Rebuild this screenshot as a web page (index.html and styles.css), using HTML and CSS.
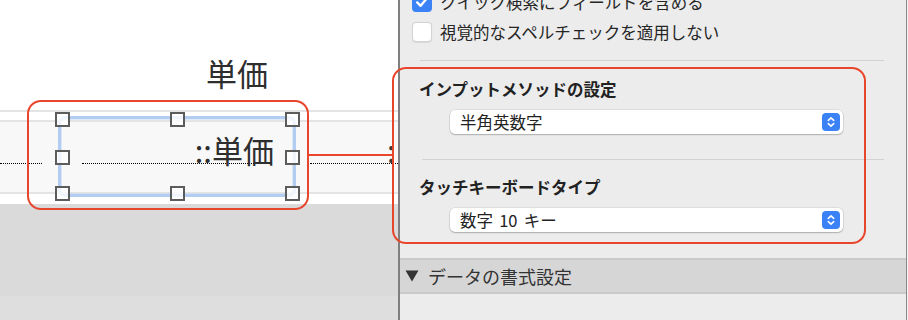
FILE: index.html
```html
<!DOCTYPE html>
<html lang="ja">
<head>
<meta charset="utf-8">
<title>Inspector</title>
<link rel="stylesheet" href="styles.css">
</head>
<body>
<div class="screen">
  <div class="canvas">
    <div class="canvas-head"><span class="label">単価</span></div>
    <div class="rule"></div>
    <div class="gap-a"></div>
    <div class="rule"></div>
    <div class="body-row"></div>
    <div class="rule"></div>
    <div class="gap-b"></div>
    <div class="footer-a"></div>
    <div class="footer-b"></div>

    <div class="dots dots-1"></div>
    <div class="dots dots-2"></div>
    <div class="dots dots-3"></div>

    <div class="field"></div>
    <div class="field-text">::単価</div>
    <div class="next-text">:</div>

    <div class="handle h-tl"></div>
    <div class="handle h-tc"></div>
    <div class="handle h-tr"></div>
    <div class="handle h-ml"></div>
    <div class="handle h-mr"></div>
    <div class="handle h-bl"></div>
    <div class="handle h-bc"></div>
    <div class="handle h-br"></div>
  </div>

  <div class="panel">
    <div class="checks">
      <div class="check-row">
        <span class="box box-on">
          <svg viewBox="0 0 20 20" width="20" height="20"><path d="M5.2 10.4 L8.6 13.8 L14.8 6.4" fill="none" stroke="#fff" stroke-width="2.4" stroke-linecap="round" stroke-linejoin="round"/></svg>
        </span>
        <span class="check-text">クイック検索にフィールドを含める</span>
      </div>
      <div class="check-row">
        <span class="box box-off"></span>
        <span class="check-text">視覚的なスペルチェックを適用しない</span>
      </div>
    </div>

    <div class="sep sep-1"></div>

    <div class="section sec-1">
      <div class="heading">インプットメソッドの設定</div>
      <div class="popup">
        <span class="popup-text">半角英数字</span>
        <span class="stepper">
          <svg viewBox="0 0 18 18" width="18" height="18"><path d="M6.3 7.4 L9 4.9 L11.7 7.4 M6.3 10.6 L9 13.1 L11.7 10.6" fill="none" stroke="#fff" stroke-width="1.6" stroke-linecap="round" stroke-linejoin="round"/></svg>
        </span>
      </div>
    </div>

    <div class="sep sep-2"></div>

    <div class="section sec-2">
      <div class="heading">タッチキーボードタイプ</div>
      <div class="popup">
        <span class="popup-text popup-spaced">数字 10 キー</span>
        <span class="stepper">
          <svg viewBox="0 0 18 18" width="18" height="18"><path d="M6.3 7.4 L9 4.9 L11.7 7.4 M6.3 10.6 L9 13.1 L11.7 10.6" fill="none" stroke="#fff" stroke-width="1.6" stroke-linecap="round" stroke-linejoin="round"/></svg>
        </span>
      </div>
    </div>

    <div class="group-head">
      <svg class="disclosure" viewBox="0 0 14 12" width="14" height="12"><path d="M0.5 0.5 L13.5 0.5 L7 11.5 Z" fill="#333"/></svg>
      <span class="group-title">データの書式設定</span>
    </div>
    <div class="group-body"></div>
  </div>

  <div class="edge"></div>

  <div class="callout callout-field"></div>
  <div class="callout-link"></div>
  <div class="callout callout-panel"></div>
</div>
</body>
</html>
```

FILE: styles.css
```css
* {
  box-sizing: border-box;
}

html, body {
  margin: 0;
  padding: 0;
}

body {
  width: 908px;
  height: 320px;
  overflow: hidden;
  font-family: "Noto Sans CJK JP", "Noto Sans", sans-serif;
  color: #262626;
}

.screen {
  position: relative;
  display: flex;
  width: 908px;
  height: 320px;
  overflow: hidden;
}

/* ---------- layout canvas ---------- */
.canvas {
  position: relative;
  width: 398px;
  height: 320px;
  display: flex;
  flex-direction: column;
  background: #ffffff;
  overflow: hidden;
  flex: none;
}

.canvas-head {
  height: 110px;
  padding-left: 206px;
  padding-top: 57px;
}

.label {
  display: block;
  font-size: 31px;
  line-height: 1;
  color: #2e2e2e;
}

.rule {
  height: 2px;
  background: #e4e4e4;
}

.gap-a {
  height: 8px;
  background: #ffffff;
}

.body-row {
  height: 70px;
  background: #f8f8f8;
}

.gap-b {
  height: 10px;
  background: #ffffff;
}

.footer-a {
  height: 92px;
  background: #dadada;
}

.footer-b {
  flex: 1;
  background: #dedede;
}

.dots {
  position: absolute;
  top: 163px;
  height: 0;
  border-top: 1px dotted #000;
}

.dots-1 { left: 0; width: 42px; }
.dots-2 { left: 82px; width: 190px; }
.dots-3 { left: 310px; width: 88px; }

.field {
  position: absolute;
  left: 58px;
  top: 116px;
  width: 238px;
  height: 81px;
  border: 3px solid #b3cdf2;
  border-radius: 7px;
  box-shadow: inset 0 0 0 1px rgba(200, 220, 246, 0.6);
}

.field-text {
  position: absolute;
  left: 150px;
  width: 124px;
  top: 134px;
  text-align: right;
  font-size: 31px;
  line-height: 1;
  color: #2e2e2e;
}

.next-text {
  position: absolute;
  left: 387px;
  top: 134px;
  font-size: 31px;
  line-height: 1;
  color: #3a3a3a;
}

.handle {
  position: absolute;
  width: 15px;
  height: 15px;
  border: 2px solid #5c5c5c;
  background: rgba(255, 255, 255, 0.8);
}

.h-tl { left: 55px;  top: 112px; }
.h-tc { left: 170px; top: 112px; }
.h-tr { left: 285px; top: 112px; }
.h-ml { left: 55px;  top: 150px; }
.h-mr { left: 285px; top: 150px; }
.h-bl { left: 55px;  top: 186px; }
.h-bc { left: 170px; top: 186px; }
.h-br { left: 285px; top: 186px; }

/* ---------- inspector panel ---------- */
.panel {
  width: 508px;
  height: 320px;
  flex: none;
  background: #ececec;
  border-left: 2px solid #7f7f7f;
  display: flex;
  flex-direction: column;
  overflow: hidden;
}

.checks {
  margin-top: -8px;
  padding-left: 12px;
  display: flex;
  flex-direction: column;
  gap: 10px;
}

.check-row {
  display: flex;
  align-items: center;
  gap: 8px;
  height: 20px;
}

.box {
  width: 20px;
  height: 20px;
  border-radius: 4px;
  flex: none;
  display: block;
}

.box svg {
  display: block;
}

.box-on {
  background: #3a82f6;
}

.box-off {
  background: #ffffff;
  border: 1px solid #d2d2d2;
  box-shadow: 0 0.5px 1px rgba(0, 0, 0, 0.08);
}

.check-text {
  font-size: 16.5px;
  line-height: 20px;
  color: #262626;
  white-space: nowrap;
}

.sep {
  height: 1px;
  background: #d2d2d2;
  margin-right: 22px;
}

.sep-1 {
  margin-top: 18px;
  margin-left: 20px;
}

.sep-2 {
  margin-top: 25px;
  margin-left: 22px;
}

.section {
  display: flex;
  flex-direction: column;
}

.sec-1 {
  padding-top: 18px;
}

.sec-2 {
  padding-top: 17px;
}

.heading {
  padding-left: 19px;
  font-size: 16.5px;
  line-height: 20px;
  font-weight: 700;
  color: #222;
  white-space: nowrap;
}

.popup {
  margin-top: 11px;
  margin-left: 50px;
  width: 393px;
  height: 24px;
  background: #ffffff;
  border-radius: 5px;
  box-shadow: 0 0 0 0.5px rgba(0, 0, 0, 0.12), 0 1px 1.5px rgba(0, 0, 0, 0.22);
  display: flex;
  align-items: center;
  justify-content: space-between;
  padding-left: 10px;
  padding-right: 3px;
}

.popup-text {
  font-size: 16.5px;
  line-height: 20px;
  color: #222;
  white-space: nowrap;
}

.popup-spaced {
  word-spacing: 2.5px;
}

.stepper {
  width: 18px;
  height: 18px;
  border-radius: 4px;
  background: #3a82f6;
  display: block;
}

.stepper svg {
  display: block;
}

.group-head {
  margin-top: 26px;
  height: 36px;
  border-top: 2px solid #c9c9c9;
  border-bottom: 2px solid #c9c9c9;
  background: #d6d6d6;
  display: flex;
  align-items: center;
  padding-left: 5px;
  gap: 9px;
}

.disclosure {
  display: block;
  flex: none;
}

.group-title {
  font-size: 18px;
  line-height: 22px;
  color: #333;
  white-space: nowrap;
}

.group-body {
  flex: 1;
  background: #ececec;
}

.edge {
  width: 2px;
  height: 320px;
  flex: none;
  border-left: 1px solid #8a8a8a;
  background: #f4f4f4;
}

/* ---------- annotation callouts ---------- */
.callout {
  position: absolute;
  border: 2px solid #e8462c;
  border-radius: 14px;
  pointer-events: none;
}

.callout-field {
  left: 27px;
  top: 100px;
  width: 282px;
  height: 110px;
}

.callout-panel {
  left: 392px;
  top: 67px;
  width: 474px;
  height: 177px;
}

.callout-link {
  position: absolute;
  left: 308px;
  top: 154px;
  width: 85px;
  height: 2px;
  background: #e8462c;
}
```
